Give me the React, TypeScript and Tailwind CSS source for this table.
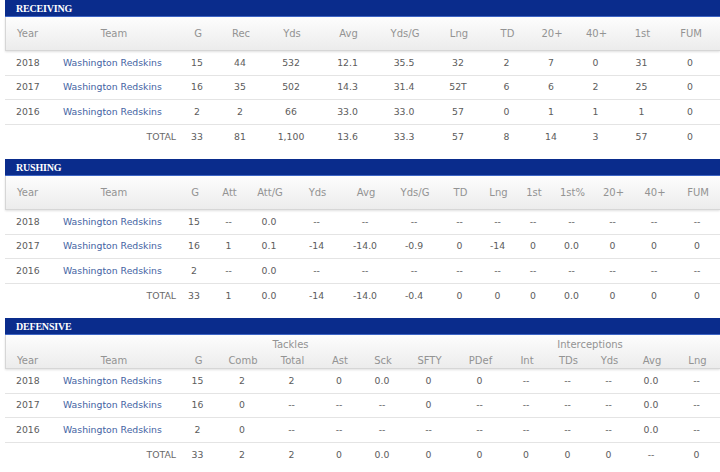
type Row = { cells: string[]; total?: boolean }

type Section = {
  title: string
  grid: string
  heads: string[]
  groups?: { label: string; span: string }[]
  rows: Row[]
}

const team = "Washington Redskins"

const sections: Section[] = [
  {
    title: "RECEIVING",
    grid: "grid-cols-[50px_122px_40px_46px_56px_57px_56px_52px_45px_44px_45px_47px_50px]",
    heads: ["G", "Rec", "Yds", "Avg", "Yds/G", "Lng", "TD", "20+", "40+", "1st", "FUM"],
    rows: [
      { cells: ["2018", team, "15", "44", "532", "12.1", "35.5", "32", "2", "7", "0", "31", "0"] },
      { cells: ["2017", team, "16", "35", "502", "14.3", "31.4", "52T", "6", "6", "2", "25", "0"] },
      { cells: ["2016", team, "2", "2", "66", "33.0", "33.0", "57", "0", "1", "1", "1", "0"] },
      { cells: ["33", "81", "1,100", "13.6", "33.3", "57", "8", "14", "3", "57", "0"], total: true },
    ],
  },
  {
    title: "RUSHING",
    grid: "grid-cols-[50px_122px_34px_35px_46px_49px_48px_50px_41px_35px_36px_41px_41px_42px_44px]",
    heads: ["G", "Att", "Att/G", "Yds", "Avg", "Yds/G", "TD", "Lng", "1st", "1st%", "20+", "40+", "FUM"],
    rows: [
      { cells: ["2018", team, "15", "--", "0.0", "--", "--", "--", "--", "--", "--", "--", "--", "--", "--"] },
      { cells: ["2017", team, "16", "1", "0.1", "-14", "-14.0", "-0.9", "0", "-14", "0", "0.0", "0", "0", "0"] },
      { cells: ["2016", team, "2", "--", "0.0", "--", "--", "--", "--", "--", "--", "--", "--", "--", "--"] },
      { cells: ["33", "1", "0.0", "-14", "-14.0", "-0.4", "0", "0", "0", "0.0", "0", "0", "0"], total: true },
    ],
  },
  {
    title: "DEFENSIVE",
    grid: "grid-cols-[50px_122px_41px_48px_51px_44px_42px_51px_51px_42px_41px_41px_44px_47px]",
    heads: ["G", "Comb", "Total", "Ast", "Sck", "SFTY", "PDef", "Int", "TDs", "Yds", "Avg", "Lng"],
    groups: [
      { label: "", span: "col-span-3" },
      { label: "Tackles", span: "col-span-3" },
      { label: "", span: "col-span-3" },
      { label: "Interceptions", span: "col-span-4" },
      { label: "", span: "col-span-1" },
    ],
    rows: [
      { cells: ["2018", team, "15", "2", "2", "0", "0.0", "0", "0", "--", "--", "--", "0.0", "--"] },
      { cells: ["2017", team, "16", "0", "--", "--", "--", "0", "--", "--", "--", "--", "0.0", "--"] },
      { cells: ["2016", team, "2", "0", "--", "--", "--", "--", "--", "--", "--", "--", "0.0", "--"] },
      { cells: ["33", "2", "2", "0", "0.0", "0", "0", "0", "0", "0", "--", "0"], total: true },
    ],
  },
]

function StatTable({ s }: { s: Section }) {
  return (
    <section className="ml-[5px]">
      <div className="flex h-[17px] items-center border-b border-[#3f66c6] bg-[#0a2c8c] pl-[11px]">
        <span className="font-['Liberation_Serif',serif] text-[10px] font-bold tracking-[-0.2px] text-white">
          {s.title}
        </span>
      </div>

      <div className="flex h-[34px] flex-col justify-center border-b border-l border-[#d6d6d6] bg-gradient-to-b from-[#fdfdfd] to-[#ececec] text-[10px] text-[#939393] shadow-[0_1px_2px_rgba(0,0,0,0.12)]">
        {s.groups && (
          <div className={`grid ${s.grid} h-[19px] items-center pt-[1px]`}>
            {s.groups.map((g, i) => (
              <div key={i} className={`${g.span} text-center`}>
                {g.label}
              </div>
            ))}
          </div>
        )}
        <div className={`grid ${s.grid} items-center ${s.groups ? "h-[15px]" : "h-[17px]"}`}>
          <div className="pl-[11px] text-left">Year</div>
          <div className="pr-[6px] text-center">Team</div>
          {s.heads.map((h, i) => (
            <div key={i} className="text-center whitespace-nowrap">
              {h}
            </div>
          ))}
        </div>
      </div>

      <div className="text-[9.3px] text-[#5c5c5c]">
        {s.rows.map((r, i) => (
          <div
            key={i}
            className={`grid ${s.grid} h-[24.5px] items-center ${r.total ? "" : "border-b border-[#e4e4e4]"}`}
          >
            {r.total ? (
              <div className="col-span-2 pr-[1px] text-right text-[#6a6a6a]">TOTAL</div>
            ) : (
              <>
                <div className="pl-[11px]">{r.cells[0]}</div>
                <div className="pl-[8px] whitespace-nowrap text-[#4463a3]">{r.cells[1]}</div>
              </>
            )}
            {(r.total ? r.cells : r.cells.slice(2)).map((c, j) => (
              <div key={j} className="text-center whitespace-nowrap">
                {c}
              </div>
            ))}
          </div>
        ))}
      </div>
    </section>
  )
}

export default function App() {
  return (
    <div className="flex h-[472px] w-[720px] flex-col gap-[10px] overflow-hidden bg-white font-['DejaVu_Sans',sans-serif]">
      {sections.map((s) => (
        <StatTable key={s.title} s={s} />
      ))}
    </div>
  )
}
